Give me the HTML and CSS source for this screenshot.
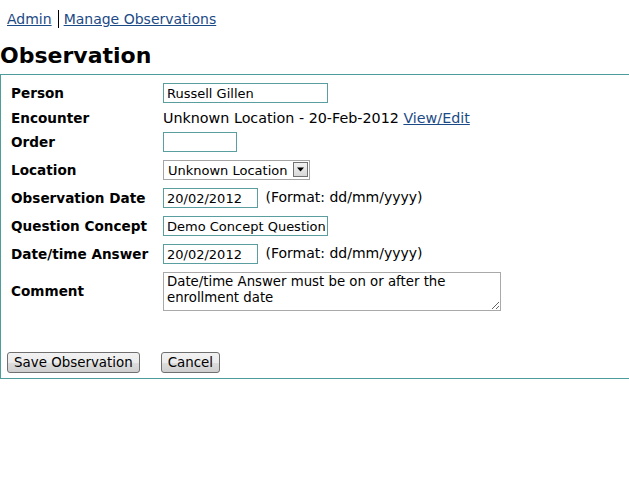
FILE: index.html
```html
<!DOCTYPE html>
<html>
<head>
<meta charset="utf-8">
<title>Observation</title>
<link rel="stylesheet" href="styles.css">
</head>
<body>
<div class="crumbs"><a href="#">Admin</a><span class="sep"></span><a href="#">Manage Observations</a></div>
<h2 class="title">Observation</h2>
<form class="box">
  <table class="form">
    <tr>
      <th>Person</th>
      <td><input class="txt w-person" type="text" value="Russell Gillen"></td>
    </tr>
    <tr class="plain">
      <th>Encounter</th>
      <td>Unknown Location - 20-Feb-2012 <a href="#">View/Edit</a></td>
    </tr>
    <tr>
      <th>Order</th>
      <td><input class="txt w-order" type="text" value=""></td>
    </tr>
    <tr>
      <th>Location</th>
      <td>
        <span class="select-wrap">
          <select class="sel"><option>Unknown Location</option></select>
          <span class="arrow"><svg width="9" height="5" viewBox="0 0 9 5"><path d="M1 0.5h7l-3.5 4z" fill="#000"/></svg></span>
        </span>
      </td>
    </tr>
    <tr>
      <th>Observation Date</th>
      <td><input class="txt w-date" type="text" value="20/02/2012"> <span class="fmt">(Format: dd/mm/yyyy)</span></td>
    </tr>
    <tr>
      <th>Question Concept</th>
      <td><input class="txt w-person" type="text" value="Demo Concept Question"></td>
    </tr>
    <tr>
      <th>Date/time Answer</th>
      <td><input class="txt w-date" type="text" value="20/02/2012"> <span class="fmt">(Format: dd/mm/yyyy)</span></td>
    </tr>
    <tr class="comment">
      <th>Comment</th>
      <td><textarea class="area">Date/time Answer must be on or after the enrollment date</textarea></td>
    </tr>
  </table>
  <div class="actions">
    <button type="button" class="btn">Save Observation</button>
    <button type="button" class="btn cancel">Cancel</button>
  </div>
</form>
</body>
</html>
```
FILE: styles.css
```css
html, body {
  margin: 0;
  padding: 0;
  background: #fff;
}
body {
  font-family: "DejaVu Sans", Verdana, sans-serif;
  font-size: 14px;
  color: #000;
}
a {
  color: #1c4a86;
}
.crumbs {
  display: flex;
  align-items: center;
  padding: 9px 7px 0;
  height: 20px;
  font-size: 14px;
}
.crumbs .sep {
  display: inline-block;
  width: 1px;
  height: 18px;
  background: #000;
  margin: 0 5px 0 6px;
}
.title {
  margin: 13px 0 0;
  font-size: 22px;
  font-weight: bold;
  line-height: 28px;
  height: 32px;
}
.box {
  display: block;
  border: 1px solid #4f9c9c;
  border-right: 0;
  padding: 4px 6px 5px;
  margin: 0;
}
.form {
  border-collapse: collapse;
}
.form tr {
  height: 28px;
}
.form tr.plain {
  height: 21px;
}
.form tr.plain td {
  font-size: 14.3px;
}
.form tr.comment {
  height: 46px;
}
.form th {
  text-align: left;
  font-weight: bold;
  font-size: 13.6px;
  padding: 0 4px;
  width: 148px;
  white-space: nowrap;
  vertical-align: middle;
}
.form td {
  padding: 0;
  vertical-align: middle;
  white-space: nowrap;
}
.txt {
  box-sizing: border-box;
  height: 20px;
  border: 1px solid #5a9ea0;
  font-family: "DejaVu Sans", Verdana, sans-serif;
  font-size: 13px;
  padding: 0 2px 0 3px;
  margin: 0;
  vertical-align: middle;
  color: #000;
  background: #fff;
}
.w-person { width: 165px; }
.w-order { width: 74px; }
.w-date { width: 95px; }
.fmt {
  margin-left: 3px;
}
.select-wrap {
  position: relative;
  display: inline-block;
  vertical-align: middle;
}
.sel {
  -webkit-appearance: none;
  appearance: none;
  box-sizing: border-box;
  width: 147px;
  height: 20px;
  border: 1px solid #a5a5a5;
  background: #fff;
  font-family: "DejaVu Sans", Verdana, sans-serif;
  font-size: 13px;
  padding: 0 0 0 4px;
  margin: 0;
  color: #000;
  border-radius: 0;
  display: block;
}
.arrow {
  position: absolute;
  right: 2px;
  top: 2px;
  width: 15px;
  height: 15px;
  box-sizing: border-box;
  border: 1px solid #707070;
  background: linear-gradient(#f2f2f2, #d8d8d8);
  display: flex;
  align-items: center;
  justify-content: center;
  pointer-events: none;
}
.area {
  box-sizing: border-box;
  width: 338px;
  height: 39px;
  border: 1px solid #a9a9a9;
  font-family: "DejaVu Sans", Verdana, sans-serif;
  font-size: 13.3px;
  line-height: 16px;
  padding: 1px 3px;
  margin: 0;
  display: block;
  color: #000;
}
.actions {
  display: flex;
  gap: 21px;
  margin-top: 38px;
}
.btn {
  box-sizing: border-box;
  height: 21px;
  padding: 0 6px;
  border: 1px solid #707070;
  border-radius: 3px;
  background: linear-gradient(#f2f2f2 0%, #ebebeb 50%, #dddddd 51%, #cfcfcf 100%);
  font-family: "DejaVu Sans", Verdana, sans-serif;
  font-size: 13.4px;
  color: #000;
  margin: 0;
}
```
